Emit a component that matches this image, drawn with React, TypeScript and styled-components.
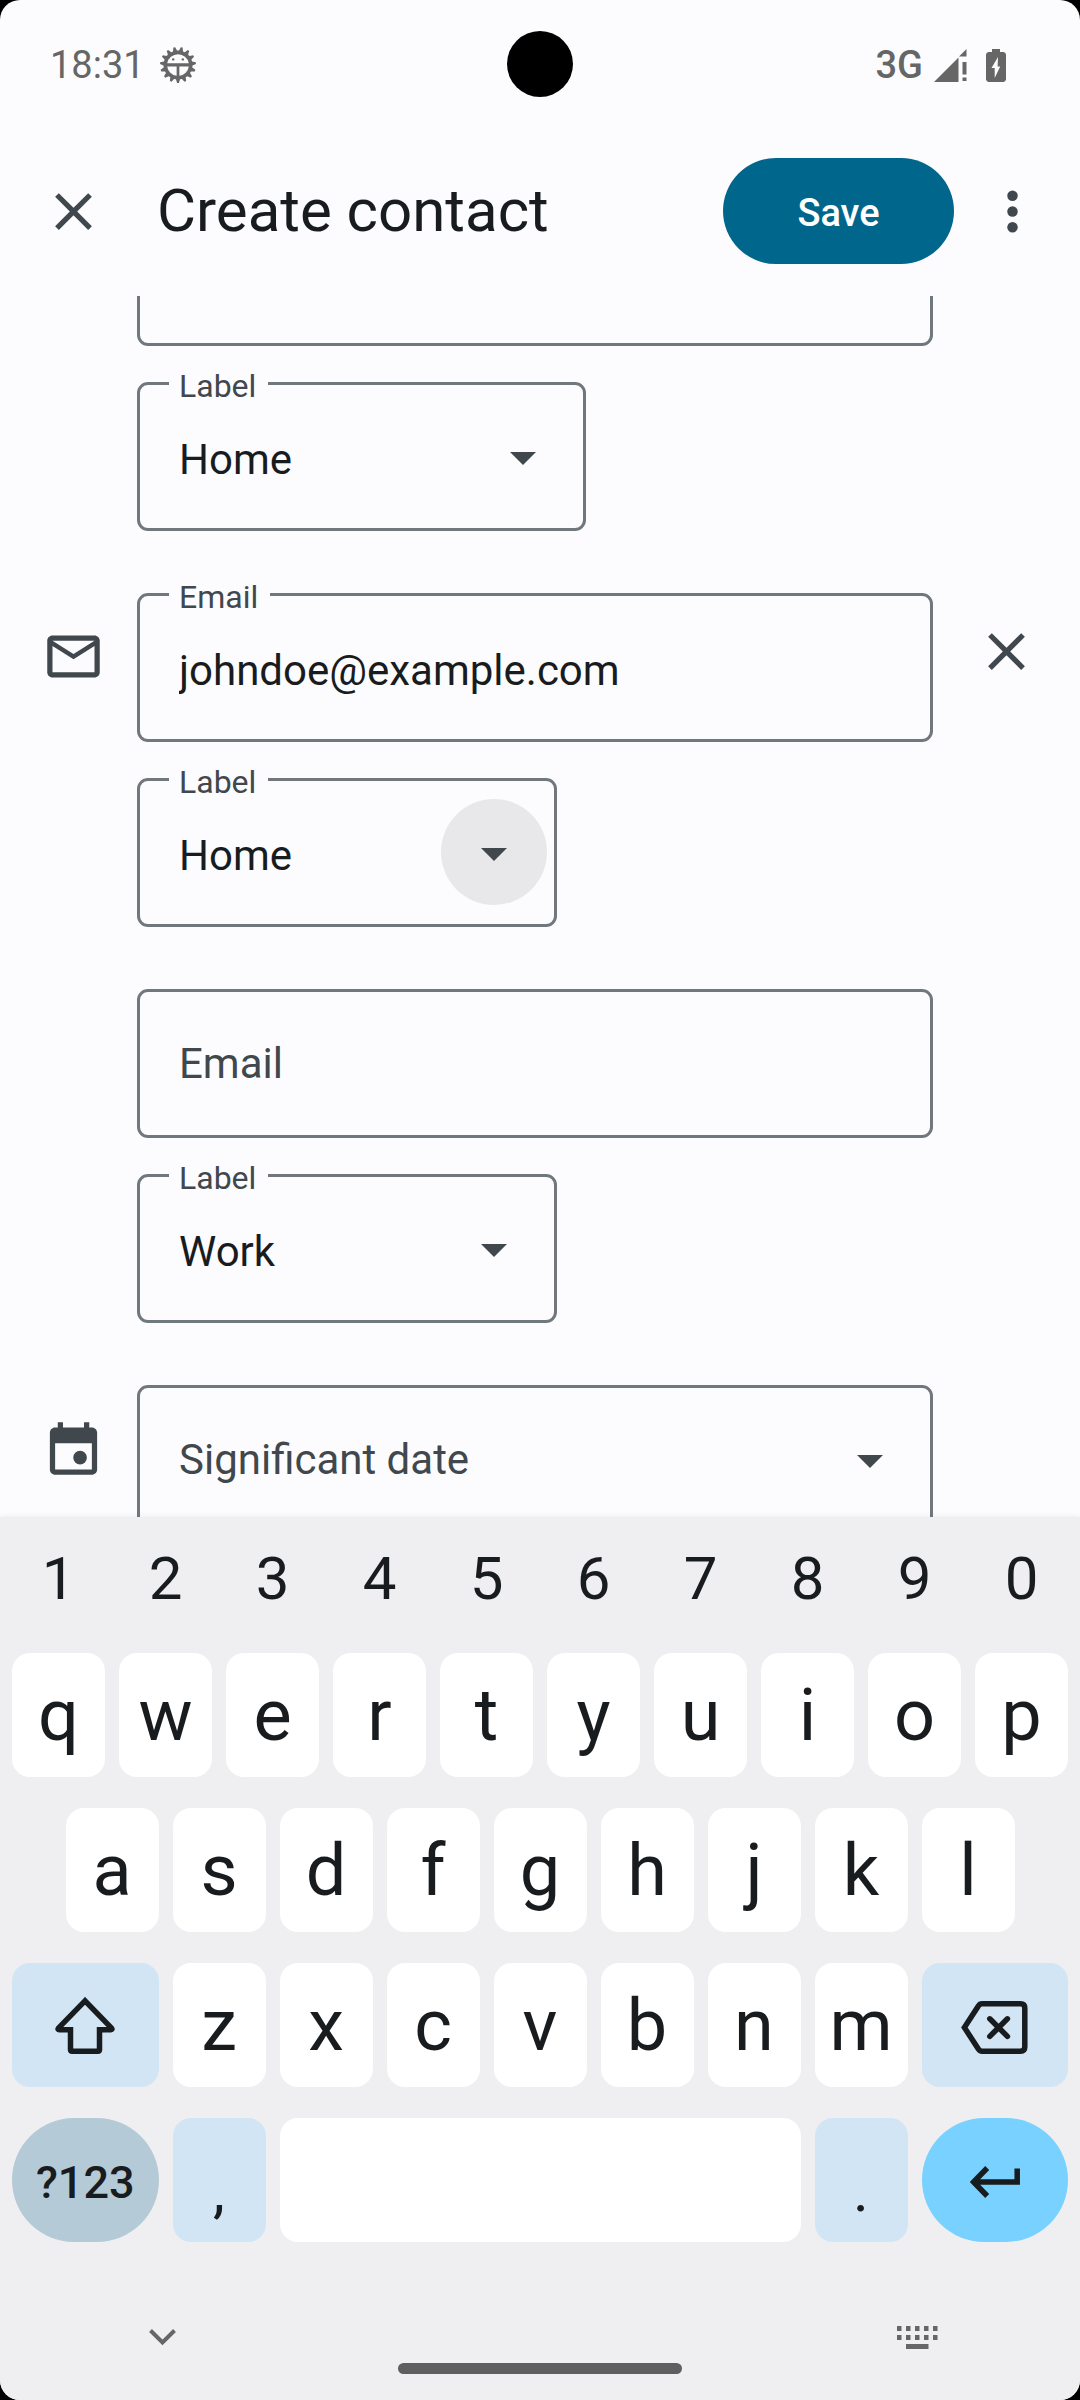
import React, { useLayoutEffect, useRef } from "react";
import styled, { createGlobalStyle, css } from "styled-components";

const color = {
  surface: "#fcfcff",
  ink: "#191c1e",
  inkSoft: "#41484d",
  outline: "#70787d",
  status: "#666666",
  primary: "#00668b",
  keyboard: "#efeff1",
  key: "#ffffff",
  keyTint: "#d2e5f4",
  keyMuted: "#b4cad6",
  keyAccent: "#78d1ff",
};

const GlobalStyle = createGlobalStyle`
  * { box-sizing: border-box; }
  html, body { margin: 0; background: #000; }
  body, button, input, select {
    font-family: Roboto, "Liberation Sans", sans-serif;
  }
  button { border: 0; padding: 0; background: none; color: inherit; cursor: pointer; }
  svg { display: block; flex: none; }
`;

const Screen = styled.div`
  position: relative;
  display: flex;
  flex-direction: column;
  height: 100vh;
  overflow: hidden;
  border-radius: 20px;
  background: ${color.surface};
  color: ${color.ink};
`;

/* ---------- status bar ---------- */

const StatusBar = styled.div`
  display: flex;
  align-items: center;
  justify-content: space-between;
  height: 130px;
  padding: 0 74px 0 50px;
  color: ${color.status};
  font-size: 38px;
  line-height: 44px;
`;

const StatusGroup = styled.div<{ $gap: number }>`
  display: flex;
  align-items: center;
  gap: ${(p) => p.$gap}px;
`;

const Network = styled.span`
  font-weight: 500;
`;

const SignalSlot = styled.span`
  padding-right: 8px;
`;

const Camera = styled.div`
  position: absolute;
  top: 31px;
  left: 50%;
  width: 66px;
  height: 66px;
  margin-left: -33px;
  border-radius: 50%;
  background: #000;
`;

/* ---------- app bar ---------- */

const AppBar = styled.header`
  display: flex;
  align-items: center;
  padding: 28px 36px 32px 42px;
`;

const Title = styled.h1`
  flex: 1;
  margin: 0 0 0 52px;
  font-size: 60px;
  font-weight: 400;
  line-height: 72px;
`;

const IconButton = styled.button`
  color: ${color.inkSoft};
`;

const SaveButton = styled.button`
  width: 231px;
  height: 106px;
  margin-right: 27px;
  padding-top: 4px;
  border-radius: 53px;
  background: ${color.primary};
  color: #fff;
  font-size: 38px;
  font-weight: 500;
`;

/* ---------- form ---------- */

const Form = styled.main`
  flex: 1 1 0;
  min-height: 0;
  overflow-y: auto;
  scrollbar-width: none;
`;

const Sections = styled.div`
  display: flex;
  flex-direction: column;
  gap: 62px;
  padding-bottom: 62px;
`;

const Section = styled.section`
  display: grid;
  grid-template-columns: 137px 1fr 147px;
  color: ${color.inkSoft};
`;

const Side = styled.div<{ $top: number }>`
  padding: ${(p) => p.$top}px 0 0 42px;
`;

const Fields = styled.div`
  display: flex;
  flex-direction: column;
  gap: 36px;
`;

const FieldBox = styled.div<{ $width?: number }>`
  position: relative;
  height: 149px;
  width: ${(p) => (p.$width ? p.$width + "px" : "100%")};
`;

const FloatingLabel = styled.label`
  position: absolute;
  top: -16px;
  left: 32px;
  padding: 0 12px 0 10px;
  background: ${color.surface};
  color: ${color.inkSoft};
  font-size: 32px;
  line-height: 40px;
`;

const control = css<{ $filled?: boolean }>`
  display: block;
  width: 100%;
  height: 100%;
  margin: 0;
  padding: ${(p) => (p.$filled ? "6px" : "0")} 40px 0 39px;
  border: 3px solid ${color.outline};
  border-radius: 11px;
  outline: 0;
  background: transparent;
  color: ${(p) => (p.$filled ? color.ink : color.inkSoft)};
  font-size: 42px;
  line-height: 50px;
`;

const TextInput = styled.input<{ $filled?: boolean }>`
  ${control}
  &::placeholder {
    color: ${color.inkSoft};
    opacity: 1;
  }
`;

const SelectInput = styled.select<{ $filled?: boolean }>`
  ${control}
  appearance: none;
`;

const ArrowHalo = styled.span<{ $active?: boolean }>`
  position: absolute;
  top: 21px;
  right: 10px;
  display: flex;
  align-items: center;
  justify-content: center;
  width: 106px;
  height: 106px;
  padding-top: 4px;
  border-radius: 50%;
  background: ${(p) => (p.$active ? "#e8e8ea" : "transparent")};
  pointer-events: none;
`;

/* ---------- keyboard ---------- */

const Keyboard = styled.div`
  position: relative;
  padding: 0 12px;
  background: ${color.keyboard};
  box-shadow: 0 -1px 5px rgba(0, 0, 0, 0.06);
`;

const DigitRow = styled.div`
  display: grid;
  grid-template-columns: repeat(10, 1fr);
  gap: 14px;
  height: 122px;
  margin-bottom: 14px;
`;

const DigitKey = styled.button`
  font-size: 60px;
`;

const KeyGrid = styled.div`
  display: grid;
  grid-template-columns: repeat(20, 1fr);
  grid-auto-rows: 124px;
  gap: 31px 14px;
`;

const Key = styled.button<{
  $span?: number;
  $start?: number;
  $tone?: string;
  $pill?: boolean;
}>`
  display: flex;
  align-items: center;
  justify-content: center;
  grid-column: ${(p) => p.$start ?? "auto"} / span ${(p) => p.$span ?? 2};
  border-radius: ${(p) => (p.$pill ? "62px" : "18px")};
  background: ${(p) => p.$tone ?? color.key};
  color: ${color.ink};
  font-size: 72px;
`;

const PunctuationKey = styled(Key)`
  padding-top: 20px;
  font-size: 60px;
`;

const ActionKey = styled(Key)`
  padding-top: 4px;
  font-size: 45px;
  font-weight: 500;
`;

const NavBar = styled.div`
  display: flex;
  align-items: flex-end;
  justify-content: space-between;
  height: 158px;
  padding: 0 119px;
  color: ${color.status};
`;

const NavButton = styled.button`
  display: flex;
  align-items: center;
  justify-content: center;
  width: 63px;
  height: 63px;
  margin-bottom: 31px;
`;

const HomeHandle = styled.div`
  width: 284px;
  height: 11px;
  margin-bottom: 26px;
  border-radius: 6px;
  background: #5f5f5f;
`;

/* ---------- icons ---------- */

const teeth = 15;
const gearPoints = Array.from({ length: teeth * 4 }, (_, i) => {
  const phase = i % 4;
  const r = phase < 2 ? 18 : 14.5;
  const step = (Math.PI * 2) / teeth;
  const offsets = [-0.12, 0.12, 0.34, 0.66];
  const a = Math.PI / 2 + (Math.floor(i / 4) + offsets[phase]) * step;
  return `${(18 + r * Math.cos(a)).toFixed(2)},${(18 + r * Math.sin(a)).toFixed(2)}`;
}).join(" ");

const BugIcon = () => (
  <svg width="36" height="36" viewBox="0 0 36 36" fill="currentColor">
    <polygon points={gearPoints} />
    <path d="M7.2 16.2a11 11 0 0 1 21.6 0z" fill={color.surface} />
    <path d="M7.2 19.4h9.4v9.4a11 11 0 0 1-9.4-9.4z" fill={color.surface} />
    <path d="M28.8 19.4h-9.4v9.4a11 11 0 0 0 9.4-9.4z" fill={color.surface} />
    <circle cx="13.2" cy="12.4" r="1.2" />
    <circle cx="22.8" cy="12.4" r="1.2" />
  </svg>
);

const SignalIcon = () => (
  <svg width="33" height="33" viewBox="0 0 33 33" fill="currentColor">
    <path d="M0 33 24.5 8.5V33zM25 7.5 32.5 0v7.5zM28.5 13h4v12.5h-4zM28.5 28.5h4V32h-4z" />
  </svg>
);

const BatteryIcon = () => (
  <svg width="20" height="33" viewBox="0 0 20 33" fill="currentColor">
    <path d="M6 0h8v3h4l2 2v26l-2 2H2l-2-2V5l2-2h4z" />
    <path d="M12 8 5.5 19h3.200v10L14.200 17.600H11.600z" fill={color.surface} />
  </svg>
);

const CloseIcon = () => (
  <svg width="63" height="63" viewBox="0 0 24 24" fill="currentColor">
    <path d="M19 6.410 17.590 5 12 10.590 6.410 5 5 6.410 10.590 12 5 17.590 6.410 19 12 13.410 17.590 19 19 17.590 13.410 12z" />
  </svg>
);

const MoreIcon = () => (
  <svg width="63" height="63" viewBox="0 0 24 24" fill="currentColor">
    <circle cx="12" cy="6" r="2" />
    <circle cx="12" cy="12" r="2" />
    <circle cx="12" cy="18" r="2" />
  </svg>
);

const MailIcon = () => (
  <svg width="63" height="63" viewBox="0 0 24 24" fill="currentColor">
    <path d="M22 6c0-1.100-.9-2-2-2H4c-1.100 0-2 .9-2 2v12c0 1.100.9 2 2 2h16c1.100 0 2-.9 2-2V6zm-2 0-8 5-8-5h16zm0 12H4V8l8 5 8-5v10z" />
  </svg>
);

const CalendarIcon = () => (
  <svg width="63" height="63" viewBox="0 0 24 24" fill="currentColor">
    <path
      fillRule="evenodd"
      d="M16 2v2H8V2H6v2H5c-1.100 0-2 .9-2 2v14c0 1.100.9 2 2 2h14c1.100 0 2-.9 2-2V6c0-1.100-.9-2-2-2h-1V2zM5 10h14v10H5z"
    />
    <circle cx="14.5" cy="15.5" r="2.6" />
  </svg>
);

const ArrowIcon = () => (
  <svg width="26" height="13" viewBox="0 0 26 13" fill={color.inkSoft}>
    <path d="M0 0h26L13 13z" />
  </svg>
);

const ShiftIcon = () => (
  <svg width="60" height="57" viewBox="0 0 60 57" fill="none" stroke="currentColor" strokeWidth="5.5">
    <path d="M30 3.800 3.400 31.200Q2.400 32.700 4 32.700H15.500V52.800Q15.500 54.200 17 54.200H43Q44.500 54.200 44.500 52.800V32.700H56Q57.600 32.700 56.600 31.200z" />
  </svg>
);

const BackspaceIcon = () => (
  <svg
    width="67"
    height="53"
    viewBox="0 0 67 53"
    fill="none"
    stroke="currentColor"
    strokeWidth="5.5"
    strokeLinecap="round"
  >
    <path d="M3.400 26.500 17.500 4.800Q18.700 2.800 21 2.800H59.500Q63.800 2.800 63.800 7V46Q63.800 50.200 59.500 50.200H21Q18.700 50.200 17.500 48.200z" />
    <path d="m28.800 17.800 17.600 17.600m0-17.600L28.800 35.400" />
  </svg>
);

const EnterIcon = () => (
  <svg width="50" height="32" viewBox="0 0 50 32" fill="none" stroke="currentColor" strokeWidth="5.5">
    <path d="M17.200 2 3.600 16l13.600 14M4 16h43.200V2.500" />
  </svg>
);

const ChevronIcon = () => (
  <svg width="27" height="17" viewBox="0 0 27 17" fill="none" stroke="currentColor" strokeWidth="4">
    <path d="m1.500 1.500 12 12 12-12" />
  </svg>
);

const KeyboardIcon = () => (
  <svg width="41" height="23" viewBox="0 0 41 23" fill="currentColor">
    {[0, 9, 18, 27, 36].map((x) => (
      <path key={x} d={`M${x} 0h4.5v5h-4.5zM${x} 9h4.5v5h-4.5z`} />
    ))}
    <path d="M9 18h22.500v5H9z" />
  </svg>
);

/* ---------- pieces ---------- */

type LabelSelectProps = {
  id: string;
  value: string;
  width: number;
  active?: boolean;
};

const LabelSelect = ({ id, value, width, active }: LabelSelectProps) => (
  <FieldBox $width={width}>
    <ArrowHalo $active={active}>
      <ArrowIcon />
    </ArrowHalo>
    <SelectInput id={id} defaultValue={value} $filled>
      <option>Home</option>
      <option>Work</option>
    </SelectInput>
    <FloatingLabel htmlFor={id}>Label</FloatingLabel>
  </FieldBox>
);

const letters = (row: string) => row.split("");

export default function App() {
  const form = useRef<HTMLElement>(null);

  // Open the form part-way down, with the phone field leaving the top edge.
  useLayoutEffect(() => {
    if (form.current) form.current.scrollTop = 99;
  }, []);

  return (
    <>
      <GlobalStyle />
      <Screen>
        <StatusBar>
          <StatusGroup $gap={15}>
            <span>18:31</span>
            <BugIcon />
          </StatusGroup>
          <StatusGroup $gap={11}>
            <Network>3G</Network>
            <SignalSlot>
              <SignalIcon />
            </SignalSlot>
            <BatteryIcon />
          </StatusGroup>
        </StatusBar>
        <Camera />

        <AppBar>
          <IconButton aria-label="Close">
            <CloseIcon />
          </IconButton>
          <Title>Create contact</Title>
          <SaveButton>Save</SaveButton>
          <IconButton aria-label="More options">
            <MoreIcon />
          </IconButton>
        </AppBar>

        <Form ref={form}>
          <Sections>
            <Section>
              <Side $top={32} />
              <Fields>
                <FieldBox>
                  <TextInput type="tel" aria-label="Phone" />
                </FieldBox>
                <LabelSelect id="phone-label" value="Home" width={449} />
              </Fields>
            </Section>

            <Section>
              <Side $top={32}>
                <MailIcon />
              </Side>
              <Fields>
                <FieldBox>
                  <TextInput id="email" type="email" defaultValue="johndoe@example.com" $filled />
                  <FloatingLabel htmlFor="email">Email</FloatingLabel>
                </FieldBox>
                <LabelSelect id="email-label" value="Home" width={420} active />
              </Fields>
              <Side $top={27}>
                <IconButton aria-label="Remove email">
                  <CloseIcon />
                </IconButton>
              </Side>
            </Section>

            <Section>
              <Side $top={32} />
              <Fields>
                <FieldBox>
                  <TextInput type="email" placeholder="Email" aria-label="Email" />
                </FieldBox>
                <LabelSelect id="email-2-label" value="Work" width={420} />
              </Fields>
            </Section>

            <Section>
              <Side $top={32}>
                <CalendarIcon />
              </Side>
              <Fields>
                <FieldBox>
                  <ArrowHalo>
                    <ArrowIcon />
                  </ArrowHalo>
                  <SelectInput aria-label="Significant date">
                    <option>Significant date</option>
                  </SelectInput>
                </FieldBox>
              </Fields>
            </Section>
          </Sections>
        </Form>

        <Keyboard>
          <DigitRow>
            {letters("1234567890").map((d) => (
              <DigitKey key={d}>{d}</DigitKey>
            ))}
          </DigitRow>
          <KeyGrid>
            {letters("qwertyuiop").map((c) => (
              <Key key={c}>{c}</Key>
            ))}
            {letters("asdfghjkl").map((c, i) => (
              <Key key={c} $start={2 + i * 2}>
                {c}
              </Key>
            ))}
            <Key $start={1} $span={3} $tone={color.keyTint} aria-label="Shift">
              <ShiftIcon />
            </Key>
            {letters("zxcvbnm").map((c) => (
              <Key key={c}>{c}</Key>
            ))}
            <ActionKey $span={3} $tone={color.keyTint} aria-label="Backspace">
              <BackspaceIcon />
            </ActionKey>
            <ActionKey $span={3} $tone={color.keyMuted} $pill>
              ?123
            </ActionKey>
            <PunctuationKey $tone={color.keyTint}>,</PunctuationKey>
            <Key $span={10} aria-label="Space" />
            <PunctuationKey $tone={color.keyTint}>.</PunctuationKey>
            <ActionKey $span={3} $tone={color.keyAccent} $pill aria-label="Enter">
              <EnterIcon />
            </ActionKey>
          </KeyGrid>
          <NavBar>
            <NavButton aria-label="Hide keyboard">
              <ChevronIcon />
            </NavButton>
            <HomeHandle />
            <NavButton aria-label="Switch keyboard">
              <KeyboardIcon />
            </NavButton>
          </NavBar>
        </Keyboard>
      </Screen>
    </>
  );
}
